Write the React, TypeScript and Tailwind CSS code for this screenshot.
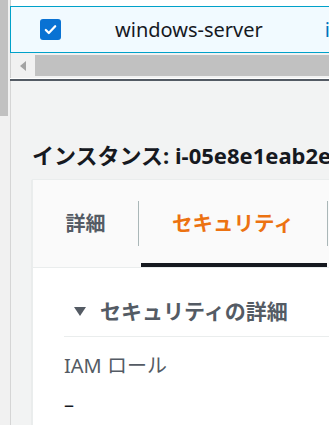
export default function App() {
  const font = { fontFamily: '"Noto Sans", "Noto Sans CJK JP", sans-serif' };

  return (
    <div className="flex w-[329px] h-[425px] overflow-hidden bg-[#f2f3f3]" style={font}>
      {/* left scrollbar strip */}
      <div className="w-[10px] shrink-0 bg-[#f1f1f1]">
        <div className="w-[8px] h-[116px] bg-[#c1c1c1]" />
      </div>

      <div className="flex-1 min-w-0 flex flex-col">
        {/* selected table row */}
        <div className="h-[6px] bg-white border-l border-[#cfcfcf]" />
        <div className="h-[47px] flex items-center bg-[#f1faff] border border-r-0 border-[#00a1c9] whitespace-nowrap overflow-hidden">
          <div className="shrink-0 ml-[29px] w-[21px] h-[21px] rounded-[3px] bg-[#0972d3] flex items-center justify-center">
            <svg width="15" height="15" viewBox="0 0 16 16" fill="none">
              <path d="M3 8.5l3.2 3.2L13 4.5" stroke="white" strokeWidth="2.4" strokeLinecap="round" strokeLinejoin="round" />
            </svg>
          </div>
          <span className="shrink-0 ml-[54px] text-[20px] text-[#16191f] leading-none">windows-server</span>
          <span className="shrink-0 ml-[62px] text-[20px] text-[#0073bb] leading-none">i-05e8e1eab2e</span>
        </div>

        {/* horizontal scrollbar */}
        <div className="h-[25px] flex bg-[#f1f1f1] border-l border-[#cfcfcf]">
          <div className="w-[24px] flex items-center justify-center">
            <div className="w-0 h-0 border-y-[5px] border-y-transparent border-r-[6px] border-r-[#a3a3a3]" />
          </div>
          <div className="flex-1 mt-[2px] h-[21px] bg-[#c1c1c1]" />
        </div>
        <div className="h-[1px] bg-white" />
        <div className="h-[2px] bg-[#545b64]" />

        {/* instance details */}
        <div className="flex-1 border-l border-[#d5d5d5] pl-[21px] pt-[60px] overflow-hidden">
          <h1 className="text-[22px] font-bold text-[#16191f] leading-[28px] whitespace-nowrap">
            インスタンス: i-05e8e1eab2e4c01a7
          </h1>
          <div className="mt-[10px] border border-r-0 border-[#eaeded] bg-white shadow-[0_1px_1px_rgba(0,28,36,0.2)]">
            {/* tabs */}
            <div className="h-[88px] flex bg-[#fafafa] border-b border-[#eaeded] whitespace-nowrap">
              <div className="w-[105px] flex items-center justify-center text-[20px] font-bold text-[#545b64]">
                詳細
              </div>
              <div className="flex items-center">
                <div className="w-px h-[45px] bg-[#aab7b8]" />
              </div>
              <div className="relative w-[188px] flex items-center justify-center text-[20.5px] font-bold text-[#ec7211]">
                セキュリティ
                <div className="absolute left-[2px] right-0 bottom-0 h-[4px] bg-[#16191f]" />
              </div>
              <div className="flex items-center">
                <div className="w-px h-[45px] bg-[#aab7b8]" />
              </div>
            </div>

            {/* section */}
            <div className="pl-[31px] pt-[30px] pb-[20px]">
              <div className="flex items-center h-[28px] whitespace-nowrap">
                <svg width="12" height="10" viewBox="0 0 12 10" className="ml-[10px]">
                  <path d="M0 0h12L6 9z" fill="#545b64" />
                </svg>
                <span className="ml-[14px] text-[21px] font-bold text-[#545b64]">セキュリティの詳細</span>
              </div>
              <div className="mt-[10px] h-px bg-[#eaeded]" />
              <div className="mt-[15px] text-[20px] text-[#545b64] leading-[28px] whitespace-nowrap">IAM ロール</div>
              <div className="mt-[11px] text-[20px] text-[#16191f] leading-[28px]">–</div>
            </div>
          </div>
        </div>
      </div>
    </div>
  );
}
